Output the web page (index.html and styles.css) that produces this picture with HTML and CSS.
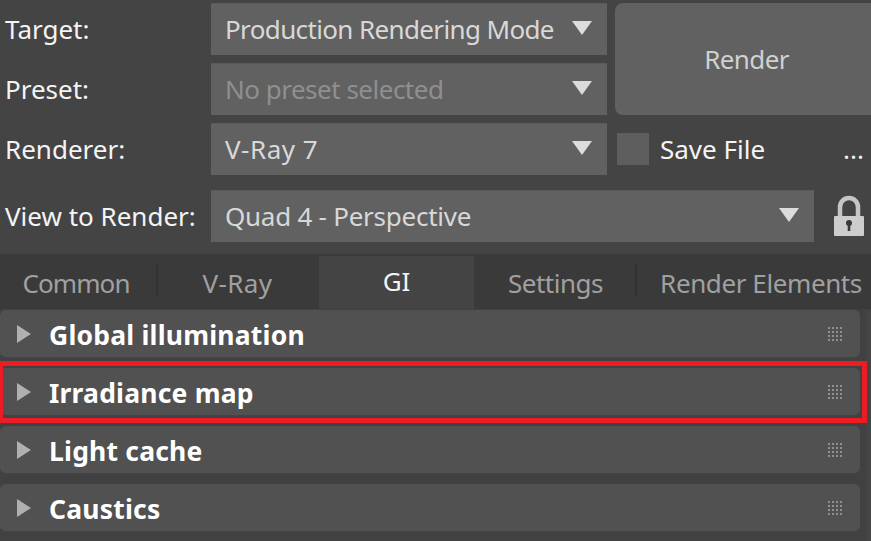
FILE: index.html
```html
<!DOCTYPE html>
<html lang="en">
<head>
<meta charset="utf-8">
<title>Render Setup</title>
<link rel="stylesheet" href="styles.css">
</head>
<body>
<svg class="defs" width="0" height="0" aria-hidden="true">
  <defs>
    <pattern id="grip-dots" width="4" height="4" patternUnits="userSpaceOnUse"><rect width="2" height="2" fill="#8f8f8f"/></pattern>
  </defs>
</svg>
<main class="window">
  <section class="top-grid">
    <label class="field-label">Target:</label>
    <div class="select"><span>Production Rendering Mode</span><i class="arrow"></i></div>
    <button class="render-btn">Render</button>
    <label class="field-label">Preset:</label>
    <div class="select disabled"><span>No preset selected</span><i class="arrow"></i></div>
    <label class="field-label">Renderer:</label>
    <div class="select loose"><span>V-Ray 7</span><i class="arrow"></i></div>
    <div class="save-row">
      <span class="checkbox"></span>
      <span class="save-label">Save File</span>
      <span class="ellipsis">...</span>
    </div>
  </section>
  <section class="view-row">
    <label class="field-label">View to Render:</label>
    <div class="select wide"><span>Quad 4 - Perspective</span><i class="arrow"></i></div>
    <svg class="lock" width="32" height="42" viewBox="0 0 32 42">
      <path d="M7 22V12a9 9 0 0 1 18 0v10" fill="none" stroke="#c6c6c6" stroke-width="4.5"/>
      <path d="M2 21h28a1 1 0 0 1 1 1v18a1 1 0 0 1-1 1H2a1 1 0 0 1-1-1V22a1 1 0 0 1 1-1z" fill="#cdcdcd"/>
      <circle cx="16" cy="28" r="3" fill="#3a3a3a"/>
      <rect x="14.7" y="28" width="2.6" height="8" fill="#3a3a3a"/>
    </svg>
  </section>
  <nav class="tabs">
    <div class="tab tab-common">Common</div>
    <span class="tab-sep"></span>
    <div class="tab tab-vray">V-Ray</div>
    <div class="tab tab-gi active">GI</div>
    <div class="tab tab-settings">Settings</div>
    <span class="tab-sep"></span>
    <div class="tab tab-elements">Render Elements</div>
  </nav>
  <div class="content">
    <section class="rollouts">
      <div class="rollout"><i class="expand"></i><span class="title">Global illumination</span><svg class="grip" width="14" height="14"><rect width="14" height="14" fill="url(#grip-dots)"/></svg></div>
      <div class="rollout"><i class="expand"></i><span class="title">Irradiance map</span><svg class="grip" width="14" height="14"><rect width="14" height="14" fill="url(#grip-dots)"/></svg><div class="highlight"></div></div>
      <div class="rollout"><i class="expand"></i><span class="title">Light cache</span><svg class="grip" width="14" height="14"><rect width="14" height="14" fill="url(#grip-dots)"/></svg></div>
      <div class="rollout"><i class="expand"></i><span class="title">Caustics</span><svg class="grip" width="14" height="14"><rect width="14" height="14" fill="url(#grip-dots)"/></svg></div>
    </section>
    <div class="scroll-track"></div>
  </div>
</main>
</body>
</html>
```
FILE: styles.css
```css
* { box-sizing: border-box; }
html, body { margin: 0; padding: 0; }
body {
  width: 871px; height: 541px; overflow: hidden;
  background: #444444; color: #f4f4f4;
  font-family: "Noto Sans", "DejaVu Sans", sans-serif;
  font-size: 26px;
}
.defs { position: absolute; }
.window { display: flex; flex-direction: column; height: 541px; padding-top: 3px; }
.top-grid {
  display: grid;
  grid-template-columns: 203px 396px 256px;
  grid-template-rows: repeat(3, 52px);
  column-gap: 8px; row-gap: 8px;
}
.field-label { display: flex; align-items: center; padding-left: 5px; white-space: nowrap; }
.select {
  display: flex; align-items: center; justify-content: space-between;
  height: 52px; padding: 0 15px 2px 14px;
  background: #616161; color: #d8d8d8;
  border-top: 1px solid #5a5a5a;
  letter-spacing: -0.63px;
}
.select.disabled { color: #8f8f8f; letter-spacing: -0.5px; }
.select.loose { letter-spacing: 0.5px; }
.select.wide { width: 603px; letter-spacing: -0.25px; }
.arrow {
  width: 0; height: 0; margin-top: -1px;
  border-left: 10px solid transparent; border-right: 10px solid transparent;
  border-top: 14px solid #dcdcdc;
}
.render-btn {
  grid-column: 3; grid-row: 1 / span 2;
  border: 0; border-radius: 8px 0 0 8px;
  padding: 0 0 0 7px;
  background: #616161; color: #d0d0d0;
  font: inherit; letter-spacing: -0.6px;
}
.save-row { display: flex; align-items: center; padding-left: 2px; }
.checkbox { width: 32px; height: 32px; background: #5e5e5e; }
.save-label { margin-left: 11px; }
.ellipsis { margin-left: 78px; }
.view-row { display: flex; align-items: center; margin-top: 15px; height: 52px; }
.view-row .field-label { width: 211px; }
.lock { margin-left: 19px; }
.tabs {
  display: flex; height: 55px; margin-top: 12px;
  background: #3a3a3a; color: #a0a0a0;
  padding-top: 2px;
}
.tab { display: flex; align-items: center; justify-content: center; padding-top: 1px; }
.tab-sep { width: 2px; height: 33px; margin-top: 8px; background: #323232; }
.tab-common { width: 156px; padding-right: 4px; letter-spacing: -0.9px; }
.tab-vray { width: 161px; padding-right: 2px; letter-spacing: 0.4px; }
.tab-gi { width: 155px; }
.tab-settings { width: 161px; padding-left: 2px; letter-spacing: -0.5px; }
.tab-elements { width: 234px; padding-left: 14px; letter-spacing: -0.4px; }
.tab.active { background: #444444; color: #f4f4f4; padding-top: 0; padding-bottom: 4px; }
.content { flex: 1; display: flex; align-items: stretch; padding-top: 1px; background: #414141; }
.rollouts { display: flex; flex-direction: column; gap: 10px; width: 860px; }
.scroll-track { width: 4px; margin-left: 7px; border-radius: 2px 2px 0 0; background: #454545; }
.rollout {
  position: relative;
  display: flex; align-items: center;
  height: 48px; padding-left: 17px; padding-right: 18px;
  background: #515151;
  border-radius: 6px;
  border-bottom: 1px solid #444444;
}
.expand {
  width: 0; height: 0;
  border-top: 9px solid transparent; border-bottom: 9px solid transparent;
  border-left: 14px solid #b0b0b0;
}
.title { margin-left: 18px; flex: 1; font-weight: 700; color: #ffffff; font-size: 26.5px; letter-spacing: 0.2px; padding-top: 3px; }
.highlight {
  position: absolute; left: -2px; right: -7px; top: -7px; bottom: -8px;
  border: 5px solid #ed1c24;
}
```
